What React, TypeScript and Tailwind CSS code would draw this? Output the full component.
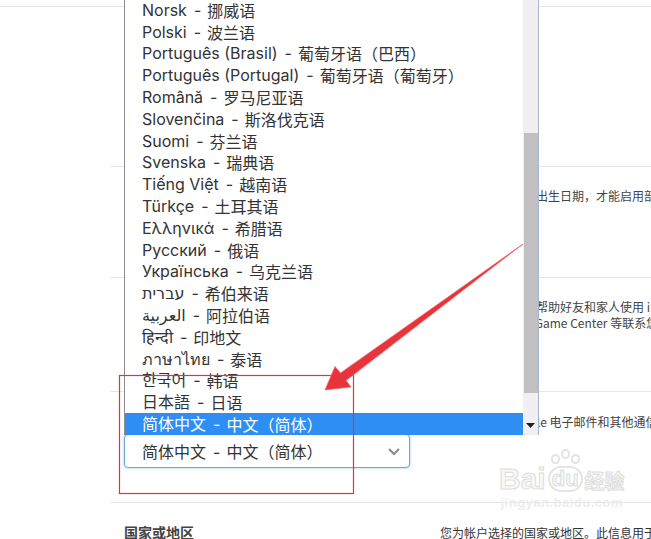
import React from "react";

const items: [string, string][] = [
  ["Norsk", "挪威语"],
  ["Polski", "波兰语"],
  ["Português (Brasil)", "葡萄牙语（巴西）"],
  ["Português (Portugal)", "葡萄牙语（葡萄牙）"],
  ["Română", "罗马尼亚语"],
  ["Slovenčina", "斯洛伐克语"],
  ["Suomi", "芬兰语"],
  ["Svenska", "瑞典语"],
  ["Tiếng Việt", "越南语"],
  ["Türkçe", "土耳其语"],
  ["Ελληνικά", "希腊语"],
  ["Русский", "俄语"],
  ["Українська", "乌克兰语"],
  ["עברית", "希伯来语"],
  ["العربية", "阿拉伯语"],
  ["हिन्दी", "印地文"],
  ["ภาษาไทย", "泰语"],
  ["한국어", "韩语"],
  ["日本語", "日语"],
  ["简体中文", "中文（简体）"],
];

const listFont =
  "font-['Inter','Noto_Sans_CJK_SC','DejaVu_Sans','Noto_Sans_CJK_KR',sans-serif]";

function Option({ name, cjk }: { name: string; cjk: string }) {
  return (
    <>
      <span>{name}</span>
      <span className="ml-[7px] mr-[6px]">-</span>
      <span className="font-['Noto_Sans_CJK_SC',sans-serif]">{cjk}</span>
    </>
  );
}

export default function App() {
  return (
    <div className="relative w-[651px] h-[539px] overflow-hidden bg-white text-[#333] font-['Noto_Sans_CJK_SC',sans-serif]">
      {/* top full-width line */}
      <div className="mt-[6px] border-t border-[#e6e6e6]" />

      {/* content column */}
      <div className="ml-[110px] flex flex-col">
        {/* section 1 */}
        <div className="h-[160px] border-b border-[#e6e6e6] grid grid-cols-[330px_1fr]">
          <div className="pl-[14px] pt-[20px] text-[14px] font-bold text-[#444]">姓名</div>
          <div />
        </div>

        {/* section 2 */}
        <div className="h-[111px] border-b border-[#e6e6e6] grid grid-cols-[330px_1fr]">
          <div className="pl-[14px] pt-[21px] text-[14px] font-bold text-[#444]">出生日期</div>
          <div className="pt-[21px] text-[12px] leading-[16px] text-[#444] whitespace-nowrap">
            您必须提供准确的出生日期，才能启用部分功能。
          </div>
        </div>

        {/* section 3 */}
        <div className="h-[114px] border-b border-[#e6e6e6] grid grid-cols-[330px_1fr]">
          <div className="pl-[14px] pt-[20px] text-[14px] font-bold text-[#444]">联系方式</div>
          <div className="pt-[21px] text-[12px] leading-[16px] text-[#444] whitespace-nowrap">
            <div>您的联系信息将会帮助好友和家人使用 iMessage、</div>
            <div>以及 FaceTime、 Game Center 等联系您。</div>
          </div>
        </div>

        {/* section 4 */}
        <div className="h-[111px] border-b border-[#e6e6e6] grid grid-cols-[330px_1fr]">
          <div className="pl-[14px] pt-[21px] flex flex-col">
            <div className="h-[21px] text-[14px] font-bold text-[#444]">语言</div>
            <div className="relative w-[286px] h-[34px] rounded-[4px] border border-[#6fa6d8] shadow-[0_0_3px_#9cc6ee] bg-white flex items-center pl-[17px]">
              <span className={`${listFont} text-[16px] text-[#333] whitespace-nowrap`}>
                <Option name="简体中文" cjk="中文（简体）" />
              </span>
              <svg
                className="absolute right-[8px] top-[12px]"
                width="14"
                height="9"
                viewBox="0 0 14 9"
              >
                <path d="M2 2 L7 7 L12 2" fill="none" stroke="#8a8a8a" strokeWidth="2" />
              </svg>
            </div>
          </div>
          <div className="pt-[22px] text-[12px] leading-[16px] text-[#444] whitespace-nowrap">
            首选语言用于 Apple 电子邮件和其他通信。
          </div>
        </div>

        {/* section 5 */}
        <div className="grid grid-cols-[330px_1fr]">
          <div className="pl-[14px] pt-[21px] text-[14px] leading-[16px] font-bold text-[#444]">国家或地区</div>
          <div className="pt-[22px] text-[12px] leading-[16px] text-[#333] whitespace-nowrap">
            您为帐户选择的国家或地区。此信息用于
          </div>
        </div>
      </div>

      {/* Baidu watermark */}
      <div className="absolute left-[499px] top-[466px] flex flex-col items-center pointer-events-none select-none whitespace-nowrap">
        <div className="flex items-end gap-[2px] font-['Liberation_Sans',sans-serif] font-bold text-[#f7f7f7] [-webkit-text-stroke:1px_#dedede]">
          <span className="text-[30px] leading-[26px]">Bai</span>
          <span className="relative text-[22px] leading-[22px] px-[2px] rounded-full border-[2px] border-[#e4e4e4]">
            du
            <span className="absolute -top-[14px] left-[1px] w-[9px] h-[10px] rounded-full border-[2px] border-[#e4e4e4]" />
            <span className="absolute -top-[19px] left-[11px] w-[9px] h-[10px] rounded-full border-[2px] border-[#e4e4e4]" />
            <span className="absolute -top-[14px] left-[21px] w-[9px] h-[10px] rounded-full border-[2px] border-[#e4e4e4]" />
          </span>
          <span className="text-[20px] leading-[22px] font-['Noto_Sans_CJK_SC',sans-serif]">经验</span>
        </div>
        <div className="text-[13px] leading-[14px] mt-[4px] tracking-[0.5px] text-[#ededed] font-['Liberation_Sans',sans-serif] font-bold">
          jingyan.baidu.com
        </div>
      </div>

      {/* dropdown list popup */}
      <div className="absolute left-[124px] top-0 w-[415px] h-[435px] flex bg-white border-l border-[#8e8e8e] border-r border-r-[#a6b4cc]">
        <div className={`flex-1 overflow-hidden ${listFont} text-[16px] text-[#333]`}>
          <div className="mt-[-1px]">
            {items.map(([name, cjk], i) => {
              const sel = i === items.length - 1;
              return (
                <div
                  key={name}
                  className={`h-[21.8px] flex items-center pl-[17px] whitespace-nowrap leading-none ${
                    sel ? "bg-[#2e8ef4] text-white" : ""
                  }`}
                >
                  <Option name={name} cjk={cjk} />
                </div>
              );
            })}
          </div>
        </div>
        <div className="relative w-[15px] bg-[#f0eff2]">
          <div className="absolute left-[1px] right-[0px] top-[133px] h-[260px] bg-[#c1bfc2]" />
          <svg className="absolute left-[3px] bottom-[7px]" width="9" height="5" viewBox="0 0 9 5">
            <path d="M0 0 L9 0 L4.5 5 Z" fill="#222" />
          </svg>
        </div>
      </div>

      {/* annotation: red rectangle and arrow */}
      <svg className="absolute left-0 top-0 pointer-events-none" width="651" height="539" viewBox="0 0 651 539">
        <rect x="119.5" y="375.5" width="234" height="118" fill="none" stroke="#dc3442" strokeWidth="1.2" />
        <polygon
          points="523,244 346,380.5 351,387 325,390 335,366.5 340.5,373"
          fill="#e8333a"
          stroke="#f06a6f"
          strokeWidth="0.8"
          strokeLinejoin="round"
        />
      </svg>
    </div>
  );
}
